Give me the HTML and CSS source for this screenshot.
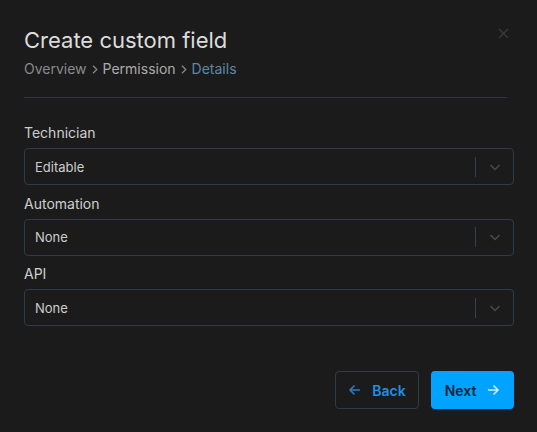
FILE: index.html
```html
<!DOCTYPE html>
<html lang="en">
<head>
<meta charset="utf-8">
<title>Create custom field</title>
<link rel="stylesheet" href="styles.css">
</head>
<body>
<div class="modal">
  <header class="modal-header">
    <div class="heading">
      <h1 class="title">Create custom field</h1>
      <nav class="crumbs">
        <span class="crumb">Overview</span>
        <svg class="sep" width="6" height="9" viewBox="0 0 6 9"><path d="M1 0.8L4.8 4.5L1 8.2" stroke="currentColor" stroke-width="1.2" fill="none"/></svg>
        <span class="crumb crumb-mid">Permission</span>
        <svg class="sep" width="6" height="9" viewBox="0 0 6 9"><path d="M1 0.8L4.8 4.5L1 8.2" stroke="currentColor" stroke-width="1.2" fill="none"/></svg>
        <span class="crumb crumb-active">Details</span>
      </nav>
    </div>
    <button class="close" aria-label="Close">
      <svg width="11" height="11" viewBox="0 0 11 11"><path d="M1 1L10 10M10 1L1 10" stroke="currentColor" stroke-width="1.3" fill="none"/></svg>
    </button>
  </header>
  <hr class="divider">
  <div class="fields">
    <div class="field">
      <label class="label">Technician</label>
      <div class="select">
        <span class="value">Editable</span>
        <span class="indicator-sep"></span>
        <span class="chevron"><svg width="14" height="14" viewBox="0 0 14 14"><path d="M2.5 5L7 9.5L11.5 5" stroke="currentColor" stroke-width="1.5" fill="none"/></svg></span>
      </div>
    </div>
    <div class="field">
      <label class="label">Automation</label>
      <div class="select">
        <span class="value">None</span>
        <span class="indicator-sep"></span>
        <span class="chevron"><svg width="14" height="14" viewBox="0 0 14 14"><path d="M2.5 5L7 9.5L11.5 5" stroke="currentColor" stroke-width="1.5" fill="none"/></svg></span>
      </div>
    </div>
    <div class="field">
      <label class="label">API</label>
      <div class="select">
        <span class="value">None</span>
        <span class="indicator-sep"></span>
        <span class="chevron"><svg width="14" height="14" viewBox="0 0 14 14"><path d="M2.5 5L7 9.5L11.5 5" stroke="currentColor" stroke-width="1.5" fill="none"/></svg></span>
      </div>
    </div>
  </div>
  <footer class="actions">
    <button class="btn btn-back">
      <svg width="14" height="14" viewBox="0 0 14 14"><path d="M12 7H2M6.5 2.5L2 7L6.5 11.5" stroke="currentColor" stroke-width="1.5" fill="none"/></svg>
      <span>Back</span>
    </button>
    <button class="btn btn-next">
      <span>Next</span>
      <svg width="14" height="14" viewBox="0 0 14 14"><path d="M2 7H12M7.5 2.5L12 7L7.5 11.5" stroke="currentColor" stroke-width="1.5" fill="none"/></svg>
    </button>
  </footer>
</div>
</body>
</html>
```

FILE: styles.css
```css
* { box-sizing: border-box; }
html, body {
  margin: 0;
  padding: 0;
  background: #1b1b1b;
  width: 537px;
  height: 432px;
  overflow: hidden;
}
body {
  font-family: Inter, "Noto Sans", sans-serif;
  color: #d4d4d4;
}
.modal {
  padding: 24px 23px 0 24px;
}
.modal-header {
  display: flex;
  justify-content: space-between;
  align-items: flex-start;
}
.title {
  margin: 3px 0 0 0;
  font-size: 22px;
  font-weight: 400;
  line-height: 27px;
  color: #dcdcdc;
  letter-spacing: 0;
}
.crumbs {
  margin-top: 6px;
  font-size: 14px;
  line-height: 17px;
  display: flex;
  align-items: center;
  gap: 5px;
  color: #8a8a8a;
}
.crumb-mid { color: #ababab; }
.crumb-active { color: #5e88a6; }
.sep { color: #8a8a8a; margin-top: 1px; }
.close {
  margin: 4px 5px 0 0;
  padding: 0;
  border: none;
  background: none;
  color: #3a3a3a;
  width: 11px;
  height: 11px;
  display: flex;
}
.divider {
  margin: 20px 7px 0 0;
  border: none;
  border-top: 1px solid #2c3841;
  height: 0;
}
.fields {
  margin-top: 26px;
  display: flex;
  flex-direction: column;
  gap: 9.5px;
}
.field {
  display: flex;
  flex-direction: column;
  gap: 7px;
}
.label {
  font-size: 14px;
  line-height: 17px;
  color: #cfcfcf;
}
.select {
  height: 37px;
  border: 1px solid #2d3c48;
  border-radius: 4px;
  display: flex;
  align-items: center;
  padding: 0 0 0 10px;
}
.value {
  flex: 1;
  font-size: 13px;
  color: #cdcdcd;
}
.indicator-sep {
  width: 1px;
  height: 20px;
  background: #34414c;
}
.chevron {
  width: 37px;
  display: flex;
  justify-content: center;
  color: #4a4a4a;
}
.actions {
  margin-top: 45px;
  display: flex;
  justify-content: flex-end;
  gap: 12px;
}
.btn {
  height: 38px;
  border-radius: 4px;
  font-family: Inter, "Noto Sans", sans-serif;
  font-size: 14px;
  font-weight: 600;
  display: flex;
  align-items: center;
  gap: 10px;
  padding: 0;
  cursor: pointer;
}
.btn-back {
  width: 84px;
  justify-content: center;
  background: transparent;
  border: 1px solid #2d3c48;
  color: #1e90e6;
}
.btn-back svg { color: #2a7fc4; }
.btn-next {
  width: 83px;
  justify-content: center;
  background: #00a3ff;
  border: none;
  color: #10263a;
}
.btn-next svg { color: #cfeeff; }
```
